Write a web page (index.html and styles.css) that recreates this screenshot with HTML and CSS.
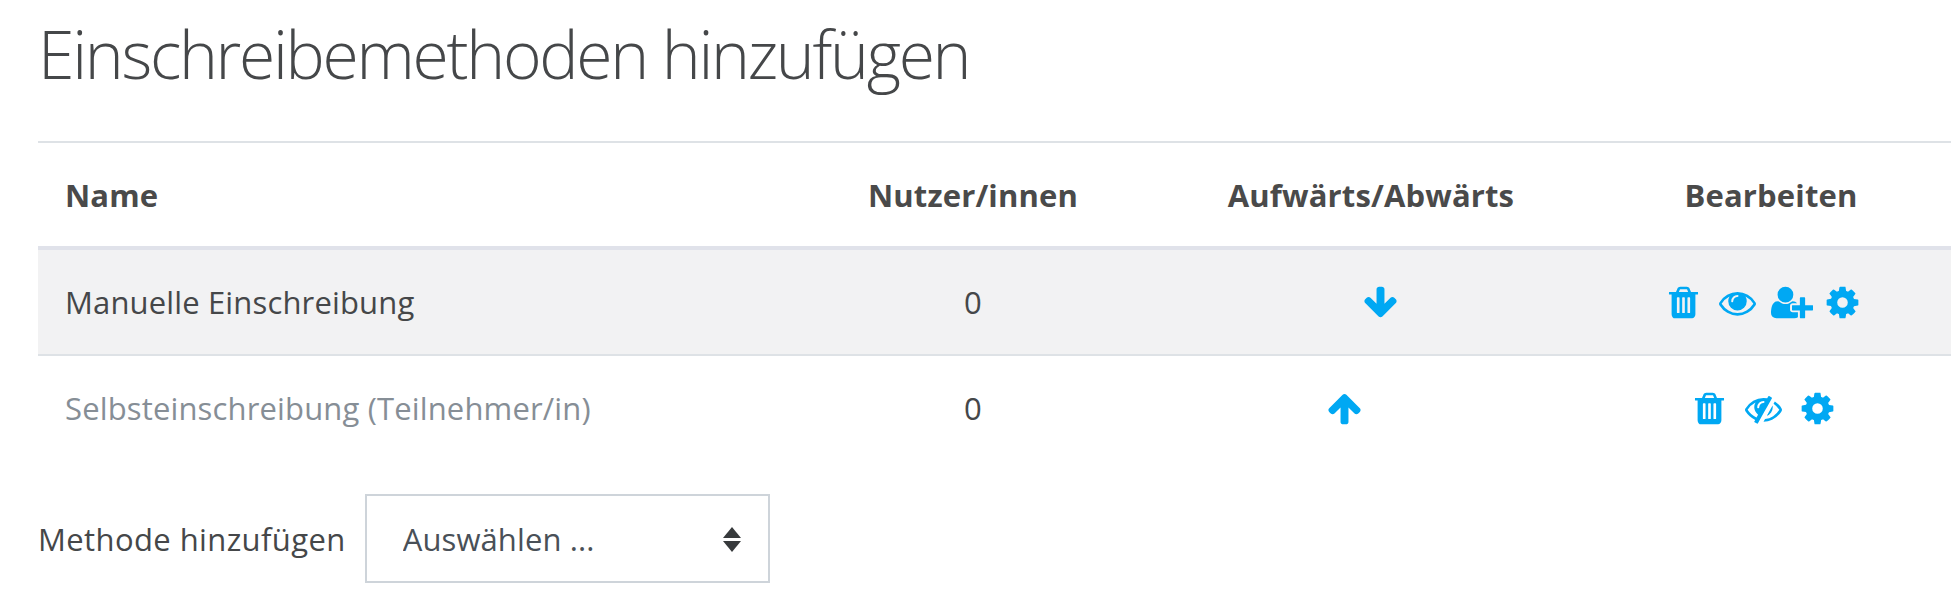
FILE: index.html
```html
<!DOCTYPE html>
<html lang="de">
<head>
  <meta charset="UTF-8"/>
  <meta name="viewport" content="width=device-width, initial-scale=1.0"/>
  <title>Einschreibemethoden</title>
  <link rel="stylesheet" href="styles.css">
</head>
<body>

<svg class="icon-defs" xmlns="http://www.w3.org/2000/svg">
  <symbol id="i-trash" viewBox="0 0 1792 1792"><path d="M704 1376v-704q0-14-9-23t-23-9h-64q-14 0-23 9t-9 23v704q0 14 9 23t23 9h64q14 0 23-9t9-23zm256 0v-704q0-14-9-23t-23-9h-64q-14 0-23 9t-9 23v704q0 14 9 23t23 9h64q14 0 23-9t9-23zm256 0v-704q0-14-9-23t-23-9h-64q-14 0-23 9t-9 23v704q0 14 9 23t23 9h64q14 0 23-9t9-23zm-544-992h448l-48-117q-7-9-17-11h-317q-10 2-17 11zm928 32v64q0 14-9 23t-23 9h-96v948q0 83-47 143.5t-113 60.5h-832q-66 0-113-58.5t-47-141.5v-952h-96q-14 0-23-9t-9-23v-64q0-14 9-23t23-9h309l70-167q15-37 54-63t79-26h320q40 0 79 26t54 63l70 167h309q14 0 23 9t9 23z"/></symbol>
  <symbol id="i-eye" viewBox="0 0 1792 1792"><path d="M1664 960q-152-236-381-353 61 104 61 225 0 185-131.5 316.5t-316.5 131.5-316.5-131.5-131.5-316.5q0-121 61-225-229 117-381 353 133 205 333.5 326.5t434.5 121.5 434.5-121.5 333.5-326.5zm-720-384q0-20-14-34t-34-14q-125 0-214.5 89.5t-89.5 214.5q0 20 14 34t34 14 34-14 14-34q0-86 61-147t147-61q20 0 34-14t14-34zm848 384q0 34-20 69-140 230-376.5 368.5t-499.5 138.5-499.5-139-376.5-368q-20-35-20-69t20-69q140-229 376.5-368t499.5-139 499.5 139 376.5 368q20 35 20 69z"/></symbol>
  <symbol id="i-eye-slash" viewBox="0 0 1792 1792"><path d="M555 1335l78-141q-87-63-136-159t-49-203q0-121 61-225-229 117-381 353 167 258 427 375zm389-759q0-20-14-34t-34-14q-125 0-214.5 89.5t-89.5 214.5q0 20 14 34t34 14 34-14 14-34q0-86 61-147t147-61q20 0 34-14t14-34zm363-191q0 7-1 9-106 189-316 567t-315 566l-49 89q-10 16-28 16-12 0-134-70-16-10-16-28 0-12 44-87-143-65-263.5-173t-208.5-245q-20-31-20-69t20-69q153-235 380-371t496-136q89 0 180 17l54-97q10-16 28-16 5 0 18 6t31 15.5 33 18.5 31.5 18.5 19.5 11.5q16 10 16 27zm37 447q0 139-79 253.5t-209 164.5l280-502q8 45 8 84zm448 128q0 35-20 69-39 64-109 145-150 172-347.5 267t-419.5 95l74-132q212-18 392.5-137t301.5-307q-115-179-282-294l63-112q95 64 182.5 153t144.5 184q20 34 20 69z"/></symbol>
  <symbol id="i-user-plus" viewBox="0 0 2048 1792"><path d="M704 896q-159 0-271.5-112.5t-112.5-271.5 112.5-271.5 271.5-112.5 271.5 112.5 112.5 271.5-112.5 271.5-271.5 112.5zm960 128h352q13 0 22.5 9.5t9.5 22.5v192q0 13-9.5 22.5t-22.5 9.5h-352v352q0 13-9.5 22.5t-22.5 9.5h-192q-13 0-22.5-9.5t-9.5-22.5v-352h-352q-13 0-22.5-9.5t-9.5-22.5v-192q0-13 9.5-22.5t22.5-9.5h352v-352q0-13 9.5-22.5t22.5-9.5h192q13 0 22.5 9.5t9.5 22.5v352zm-736 224q0 52 38 90t90 38h256v238q-68 50-171 50h-874q-121 0-194-69t-73-190q0-53 3.5-103.5t14-109 26.5-108.5 43-97.5 62-81 85.5-53.5 111.5-20q19 0 39 17 79 61 154.5 91.5t164.5 30.5 164.5-30.5 154.5-91.5q20-17 39-17 132 0 217 96h-223q-52 0-90 38t-38 90v192z"/></symbol>
  <symbol id="i-cog" viewBox="0 0 1792 1792"><path d="M1152 896q0-106-75-181t-181-75-181 75-75 181 75 181 181 75 181-75 75-181zm512-109v222q0 12-8 23t-20 13l-185 28q-19 54-39 91 35 50 107 138 10 12 10 25t-9 23q-27 37-99 108t-94 71q-12 0-26-9l-138-108q-44 23-91 38-16 136-29 186-7 28-36 28h-222q-14 0-24.5-8.5t-11.5-21.5l-28-184q-49-16-90-37l-141 107q-10 9-25 9-14 0-25-11-126-114-165-168-7-10-7-23 0-12 8-23 15-21 51-66.5t54-70.5q-27-50-41-99l-183-27q-13-2-21-12.5t-8-23.5v-222q0-12 8-23t19-13l186-28q14-46 39-92-40-57-107-138-10-12-10-24 0-10 9-23 26-36 98.5-107.5t94.5-71.5q13 0 26 10l138 107q44-23 91-38 16-136 29-186 7-28 36-28h222q14 0 24.5 8.5t11.5 21.5l28 184q49 16 90 37l142-107q9-9 24-9 13 0 25 10 129 119 165 170 7 8 7 22 0 12-8 23-15 21-51 66.5t-54 70.5q26 50 41 98l183 28q13 2 21 12.5t8 23.5z"/></symbol>
  <symbol id="i-arrow-down" viewBox="0 0 1792 1792"><path d="M1675 832q0 53-37 90l-651 652q-39 37-91 37-53 0-90-37l-651-652q-38-36-38-90 0-53 38-91l74-75q39-37 91-37 53 0 90 37l294 294v-704q0-52 38-90t90-38h128q52 0 90 38t38 90v704l294-294q37-37 90-37 52 0 91 37l75 75q37 39 37 91z"/></symbol>
  <symbol id="i-arrow-up" viewBox="0 0 1792 1792"><path d="M1675 971q0 51-37 90l-75 75q-38 38-91 38-54 0-90-38l-294-293v704q0 52-37.5 84.5t-90.5 32.5h-128q-53 0-90.5-32.5t-37.5-84.5v-704l-294 293q-36 38-90 38t-90-38l-75-75q-38-38-38-90 0-53 38-91l651-651q35-37 90-37 54 0 91 37l651 651q37 39 37 91z"/></symbol>
</svg>

<div class="container">
  <h1>Einschreibemethoden hinzufügen</h1>

  <table class="methods">
    <colgroup>
      <col class="col-name">
      <col class="col-users">
      <col class="col-move">
      <col class="col-edit">
    </colgroup>
    <thead>
      <tr>
        <th class="left">Name</th>
        <th>Nutzer/innen</th>
        <th>Aufwärts/Abwärts</th>
        <th>Bearbeiten</th>
      </tr>
    </thead>
    <tbody>
      <tr class="shaded">
        <td class="left">Manuelle Einschreibung</td>
        <td>0</td>
        <td>
          <div class="icons move-down">
            <a href="#" aria-label="Abwärts"><svg class="icon"><use href="#i-arrow-down"/></svg></a>
          </div>
        </td>
        <td>
          <div class="icons edit">
            <a href="#" aria-label="Löschen"><svg class="icon"><use href="#i-trash"/></svg></a>
            <a href="#" aria-label="Verbergen"><svg class="icon"><use href="#i-eye"/></svg></a>
            <a href="#" aria-label="Nutzer einschreiben"><svg class="icon wide"><use href="#i-user-plus"/></svg></a>
            <a href="#" aria-label="Einstellungen"><svg class="icon"><use href="#i-cog"/></svg></a>
          </div>
        </td>
      </tr>
      <tr>
        <td class="left muted">Selbsteinschreibung (Teilnehmer/in)</td>
        <td>0</td>
        <td>
          <div class="icons move-up">
            <a href="#" aria-label="Aufwärts"><svg class="icon"><use href="#i-arrow-up"/></svg></a>
          </div>
        </td>
        <td>
          <div class="icons edit">
            <a href="#" aria-label="Löschen"><svg class="icon"><use href="#i-trash"/></svg></a>
            <a href="#" aria-label="Anzeigen"><svg class="icon"><use href="#i-eye-slash"/></svg></a>
            <a href="#" aria-label="Einstellungen"><svg class="icon"><use href="#i-cog"/></svg></a>
          </div>
        </td>
      </tr>
    </tbody>
  </table>

  <div class="add-method">
    <label for="method">Methode hinzufügen</label>
    <div class="select-wrap">
      <select id="method">
        <option>Auswählen ...</option>
        <option>Gastzugang</option>
      </select>
    </div>
  </div>
</div>

</body>
</html>
```

FILE: styles.css
```css
body {
  font-family: 'Open Sans', 'Noto Sans', sans-serif;
  font-size: 31px;
  letter-spacing: 0.15px;
  margin: 0;
  background-color: white;
  color: #454749;
  overflow: hidden;
}

.icon-defs {
  display: none;
}

.container {
  padding-left: 38px;
}

h1 {
  font-weight: 300;
  font-size: 66px;
  line-height: 80px;
  letter-spacing: -2.3px;
  margin: 13px 0 48px 0;
}

.methods {
  width: 100%;
  table-layout: fixed;
  border-collapse: collapse;
  border-top: 2px solid #dee2e6;
}

.col-name { width: 757px; }
.col-users { width: 356px; }
.col-move { width: 440px; }

th, td {
  text-align: center;
  padding: 0;
}

th {
  height: 103px;
  font-weight: 700;
  font-size: 31px;
  color: #4a4a4a;
  border-bottom: 4px solid #e0e2ea;
}

td {
  height: 104px;
  border-bottom: 2px solid #dee2e6;
}

tbody tr:last-child td {
  border-bottom: none;
}

.left {
  text-align: left;
  padding-left: 27px;
}

.muted {
  color: #868e96;
}

.shaded {
  background-color: #f2f2f3;
}

.icons {
  display: flex;
  justify-content: center;
  align-items: center;
  gap: 17px;
}

.icons a {
  display: flex;
  color: #00a8f3;
}

.icons.edit {
  padding-right: 16px;
}

.move-down {
  padding-left: 18px;
}

.move-up {
  padding-right: 54px;
}

.icon {
  width: 37px;
  height: 37px;
  fill: currentColor;
}

.icon.wide {
  width: 42px;
  margin: 0 -6px 0 -2px;
}

.add-method {
  display: flex;
  align-items: center;
  gap: 19px;
  margin-top: 34px;
}

label {
  letter-spacing: 0.4px;
}

.select-wrap {
  position: relative;
}

select {
  appearance: none;
  display: block;
  width: 405px;
  height: 89px;
  padding: 0 36px;
  border: 2px solid #ced4da;
  border-radius: 0;
  background-color: white;
  color: #495057;
  font-family: inherit;
  font-size: 31px;
  letter-spacing: 0.1px;
}

.select-wrap::before,
.select-wrap::after {
  content: "";
  position: absolute;
  right: 29px;
  border-left: 9px solid transparent;
  border-right: 9px solid transparent;
  pointer-events: none;
}

.select-wrap::before {
  top: 33px;
  border-bottom: 11px solid #373a3c;
}

.select-wrap::after {
  top: 47px;
  border-top: 11px solid #373a3c;
}
```
